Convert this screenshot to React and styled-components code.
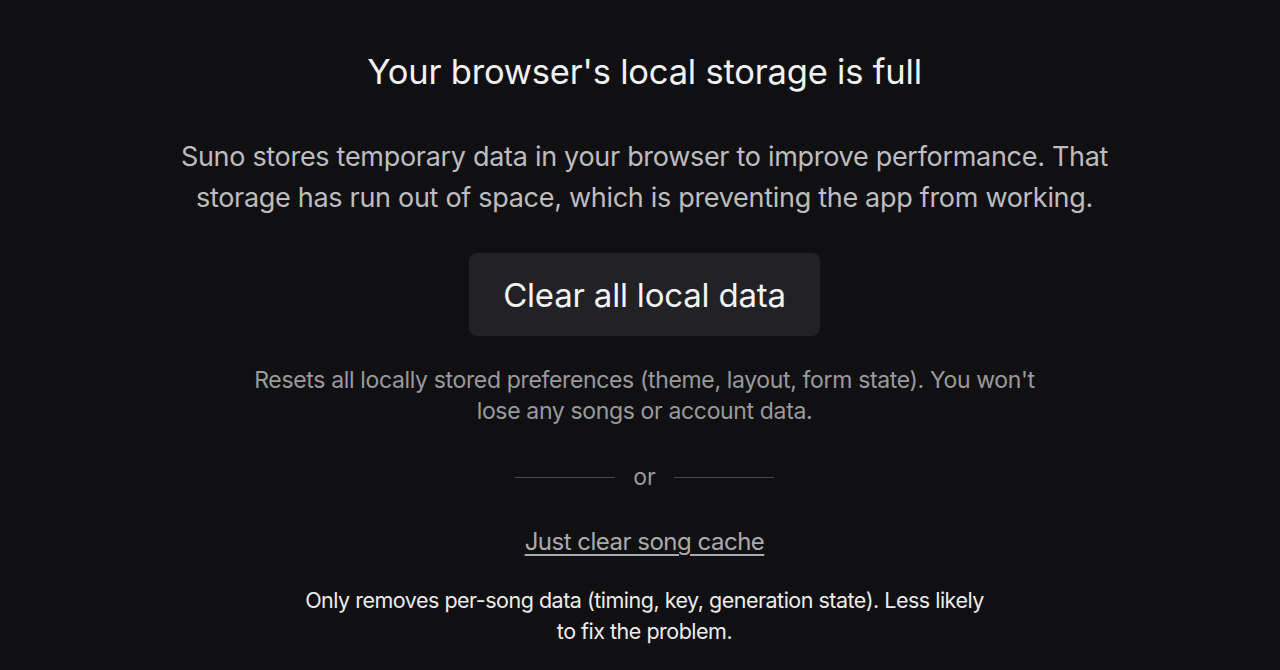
import styled, { createGlobalStyle } from 'styled-components';

const GlobalStyle = createGlobalStyle`
    html, body {
        margin: 0;
        padding: 0;
        background: #101012;
    }
    body {
        font-family: Inter, "Liberation Sans", sans-serif;
        -webkit-font-smoothing: antialiased;
    }
`;

function App() {
    return (
        <>
            <GlobalStyle />
            <Page>
                <Title>Your browser's local storage is full</Title>
                <Lead>
                    Suno stores temporary data in your browser to improve performance. That
                    <br />
                    storage has run out of space, which is preventing the app from working.
                </Lead>
                <ClearButton type="button">Clear all local data</ClearButton>
                <Note tone="muted">
                    Resets all locally stored preferences (theme, layout, form state). You won't
                    <br />
                    lose any songs or account data.
                </Note>
                <Divider>
                    <Rule />
                    <span>or</span>
                    <Rule />
                </Divider>
                <TextLink href="#">Just clear song cache</TextLink>
                <Note tone="light">
                    Only removes per-song data (timing, key, generation state). Less likely
                    <br />
                    to fix the problem.
                </Note>
            </Page>
        </>
    );
}

const Page = styled.main`
    width: 1280px;
    height: 670px;
    box-sizing: border-box;
    padding: 50px 0 0 9px;
    display: flex;
    flex-direction: column;
    align-items: center;
    text-align: center;
    overflow: hidden;
`;

const Title = styled.h1`
    margin: 0;
    font-size: 34.5px;
    line-height: 44px;
    font-weight: 400;
    color: #f2f2f2;
    letter-spacing: -0.2px;
    white-space: nowrap;
`;

const Lead = styled.p`
    margin: 42px 0 0;
    font-size: 27px;
    line-height: 41px;
    font-weight: 400;
    color: #bdbdbf;
    letter-spacing: -0.3px;
    white-space: nowrap;
`;

const ClearButton = styled.button`
    margin-top: 35px;
    width: 351px;
    height: 83px;
    border: none;
    border-radius: 8px;
    background: #222226;
    color: #f4f4f4;
    font-family: inherit;
    font-size: 33px;
    font-weight: 400;
    letter-spacing: -0.2px;
    cursor: pointer;
`;

const Note = styled.p`
    margin: ${(p) => (p.tone === 'light' ? '28px' : '29px')} 0 0;
    font-size: ${(p) => (p.tone === 'light' ? '21.5px' : '23px')};
    line-height: 31px;
    color: ${(p) => (p.tone === 'light' ? '#ececec' : '#9a9a9c')};
    letter-spacing: ${(p) => (p.tone === 'light' ? '-0.5px' : '-0.35px')};
    white-space: nowrap;
`;

const Divider = styled.div`
    margin-top: 35px;
    display: flex;
    align-items: center;
    gap: 18px;
    font-size: 23px;
    line-height: 30px;
    color: #9a9a9c;
`;

const Rule = styled.div`
    width: 100px;
    height: 1px;
    background: #4a4a4d;
`;

const TextLink = styled.a`
    margin-top: 35px;
    font-size: 24px;
    line-height: 30px;
    color: #ababad;
    text-decoration: underline;
    text-decoration-thickness: 1.5px;
    text-underline-offset: 4px;
    letter-spacing: -0.5px;
`;

export default App;
